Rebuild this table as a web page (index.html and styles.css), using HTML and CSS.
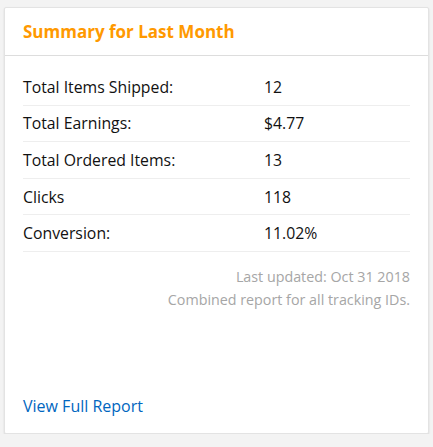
FILE: index.html
```html
<!DOCTYPE html>
<html>
<head>
<meta charset="utf-8">
<link rel="stylesheet" href="styles.css">
</head>
<body>
<div class="card">
  <div class="card-header">
    <h2 class="title">Summary for Last Month</h2>
  </div>
  <div class="card-body">
    <div class="rows">
      <div class="row"><span class="label">Total Items Shipped:</span><span class="value">12</span></div>
      <div class="row"><span class="label">Total Earnings:</span><span class="value">$4.77</span></div>
      <div class="row"><span class="label">Total Ordered Items:</span><span class="value">13</span></div>
      <div class="row"><span class="label">Clicks</span><span class="value">118</span></div>
      <div class="row"><span class="label">Conversion:</span><span class="value">11.02%</span></div>
    </div>
    <div class="meta">
      <div>Last updated: Oct 31 2018</div>
      <div>Combined report for all tracking IDs.</div>
    </div>
    <a class="report-link" href="#">View Full Report</a>
  </div>
</div>
</body>
</html>
```
FILE: styles.css
```css
html, body {
  margin: 0;
  padding: 0;
  background: #f3f3f3;
}
body {
  padding: 7px 4px 0 4px;
  font-family: "Open Sans", "Noto Sans", sans-serif;
  color: #111;
}
.card {
  background: #fff;
  border: 1px solid #e3e3e3;
  border-radius: 2px;
  box-shadow: 0 1px 2px rgba(0,0,0,0.12);
  height: 427px;
  box-sizing: border-box;
  display: flex;
  flex-direction: column;
}
.card-header {
  height: 48px;
  border-bottom: 1px solid #ddd;
  padding: 0 18px;
  display: flex;
  align-items: center;
  box-sizing: border-box;
}
.title {
  margin: 0;
  font-size: 17px;
  font-weight: 700;
  color: #f90;
}
.card-body {
  flex: 1;
  padding: 13px 18px 16px 18px;
  display: flex;
  flex-direction: column;
}
.rows {
  display: flex;
  flex-direction: column;
}
.row {
  display: grid;
  grid-template-columns: 241px 1fr;
  height: 36.6px;
  align-items: center;
  border-bottom: 1px solid #eee;
  box-sizing: border-box;
  font-size: 15.8px;
}
.meta {
  margin-top: 13px;
  text-align: right;
  font-size: 14.3px;
  line-height: 23px;
  color: #a6a6a6;
}
.report-link {
  margin-top: auto;
  color: #0066c0;
  text-decoration: none;
  font-size: 16px;
}
```
